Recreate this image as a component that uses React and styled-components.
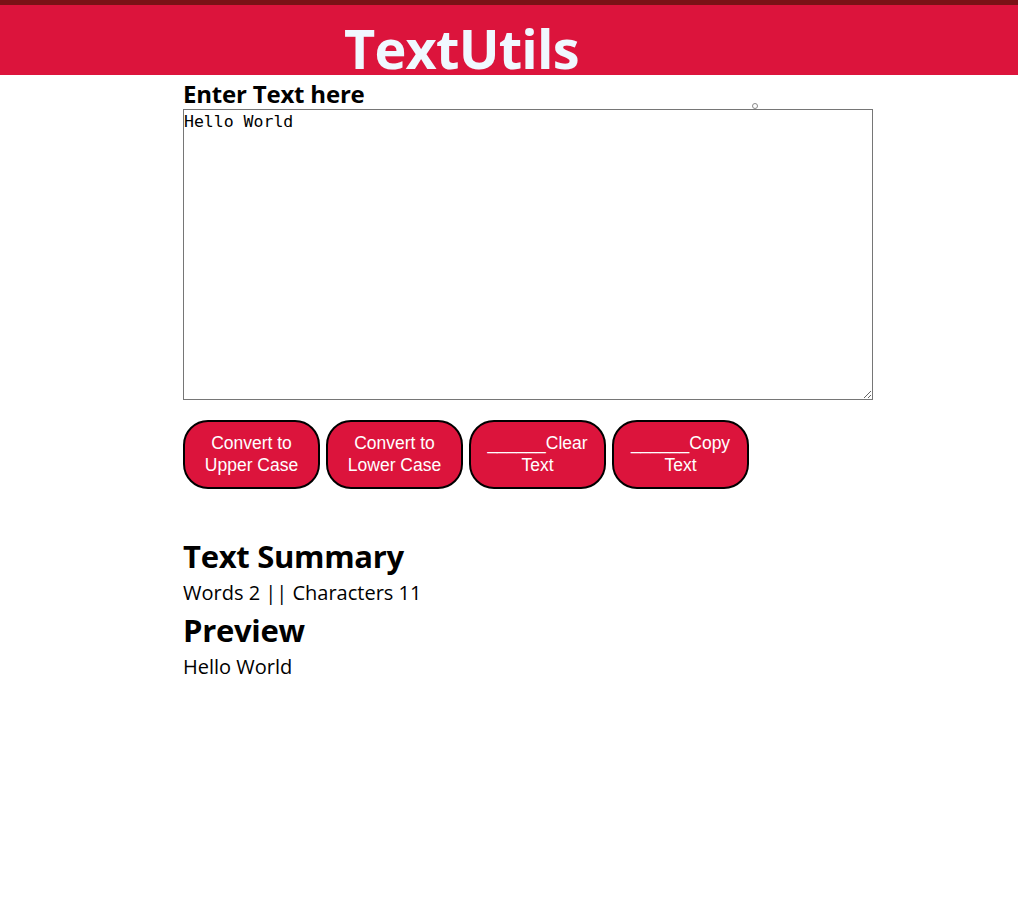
import React, { useState } from "react";
import styled, { createGlobalStyle } from "styled-components";

const Global = createGlobalStyle`
  html, body { margin: 0; padding: 0; background: #fff; }
  body { font-family: "Open Sans", "Noto Sans", sans-serif; color: #000; }
`;

const TopStrip = styled.div`
  height: 5px;
  background: #7a1216;
`;

const Header = styled.header`
  height: 70px;
  background: #dc143c;
  overflow: hidden;
  display: flex;
  align-items: flex-end;
  padding-left: 344px;
`;

const Brand = styled.h1`
  margin: 0;
  color: #f0f8ff;
  font-family: "Open Sans", sans-serif;
  font-weight: 700;
  font-size: 54px;
  letter-spacing: -0.8px;
  line-height: 70px;
  transform: translateY(8px);
`;

const Main = styled.main`
  width: 690px;
  margin-left: 183px;
  display: flex;
  flex-direction: column;
`;

const Label = styled.label`
  display: block;
  font-weight: 700;
  font-size: 24px;
  line-height: 31px;
  padding-top: 3px;
  letter-spacing: -0.2px;
`;

const AreaWrap = styled.div`
  position: relative;
`;

const Dot = styled.span`
  position: absolute;
  left: 569px;
  top: -6px;
  width: 4px;
  height: 4px;
  border: 1px solid #8a8a8a;
  border-radius: 50%;
  background: #fff;
`;

const Area = styled.textarea`
  display: block;
  box-sizing: border-box;
  width: 690px;
  height: 291px;
  margin: 0;
  padding: 1px 0 0 0;
  border: 1px solid #767676;
  font-family: "DejaVu Sans Mono", "Liberation Mono", monospace;
  font-size: 16.5px;
  line-height: 21px;
  color: #000;
  resize: both;
  outline: none;
`;

const Buttons = styled.div`
  display: flex;
  gap: 6px;
  margin-top: 20px;
`;

const Btn = styled.button`
  box-sizing: border-box;
  width: 137px;
  height: 69px;
  border: 2px solid #000;
  border-radius: 25px;
  background: #dc143c;
  color: #fff;
  font-family: "Liberation Sans", Arial, sans-serif;
  font-size: 17.5px;
  line-height: 22px;
  padding: 0 10px 2px;
  cursor: pointer;
`;

const Title = styled.h2`
  margin: 48px 0 0;
  font-size: 31px;
  line-height: 38px;
  font-weight: 700;
  letter-spacing: -0.3px;
`;

const SubTitle = styled(Title)`
  margin-top: 0;
`;

const Para = styled.p`
  margin: 0;
  font-size: 20px;
  line-height: 36px;
`;

export default function App() {
  const [text, setText] = useState("Hello World");
  const words = text.split(/\s+/).filter(Boolean).length;
  return (
    <>
      <Global />
      <TopStrip />
      <Header>
        <Brand>TextUtils</Brand>
      </Header>
      <Main>
        <Label htmlFor="box">Enter Text here</Label>
        <AreaWrap>
          <Dot />
          <Area id="box" value={text} onChange={(e) => setText(e.target.value)} />
        </AreaWrap>
        <Buttons>
          <Btn onClick={() => setText(text.toUpperCase())}>Convert to Upper Case</Btn>
          <Btn onClick={() => setText(text.toLowerCase())}>Convert to Lower Case</Btn>
          <Btn onClick={() => setText("")}>______Clear Text</Btn>
          <Btn>______Copy Text</Btn>
        </Buttons>
        <Title>Text Summary</Title>
        <Para>Words {words} || Characters {text.length}</Para>
        <SubTitle>Preview</SubTitle>
        <Para>{text}</Para>
      </Main>
    </>
  );
}
